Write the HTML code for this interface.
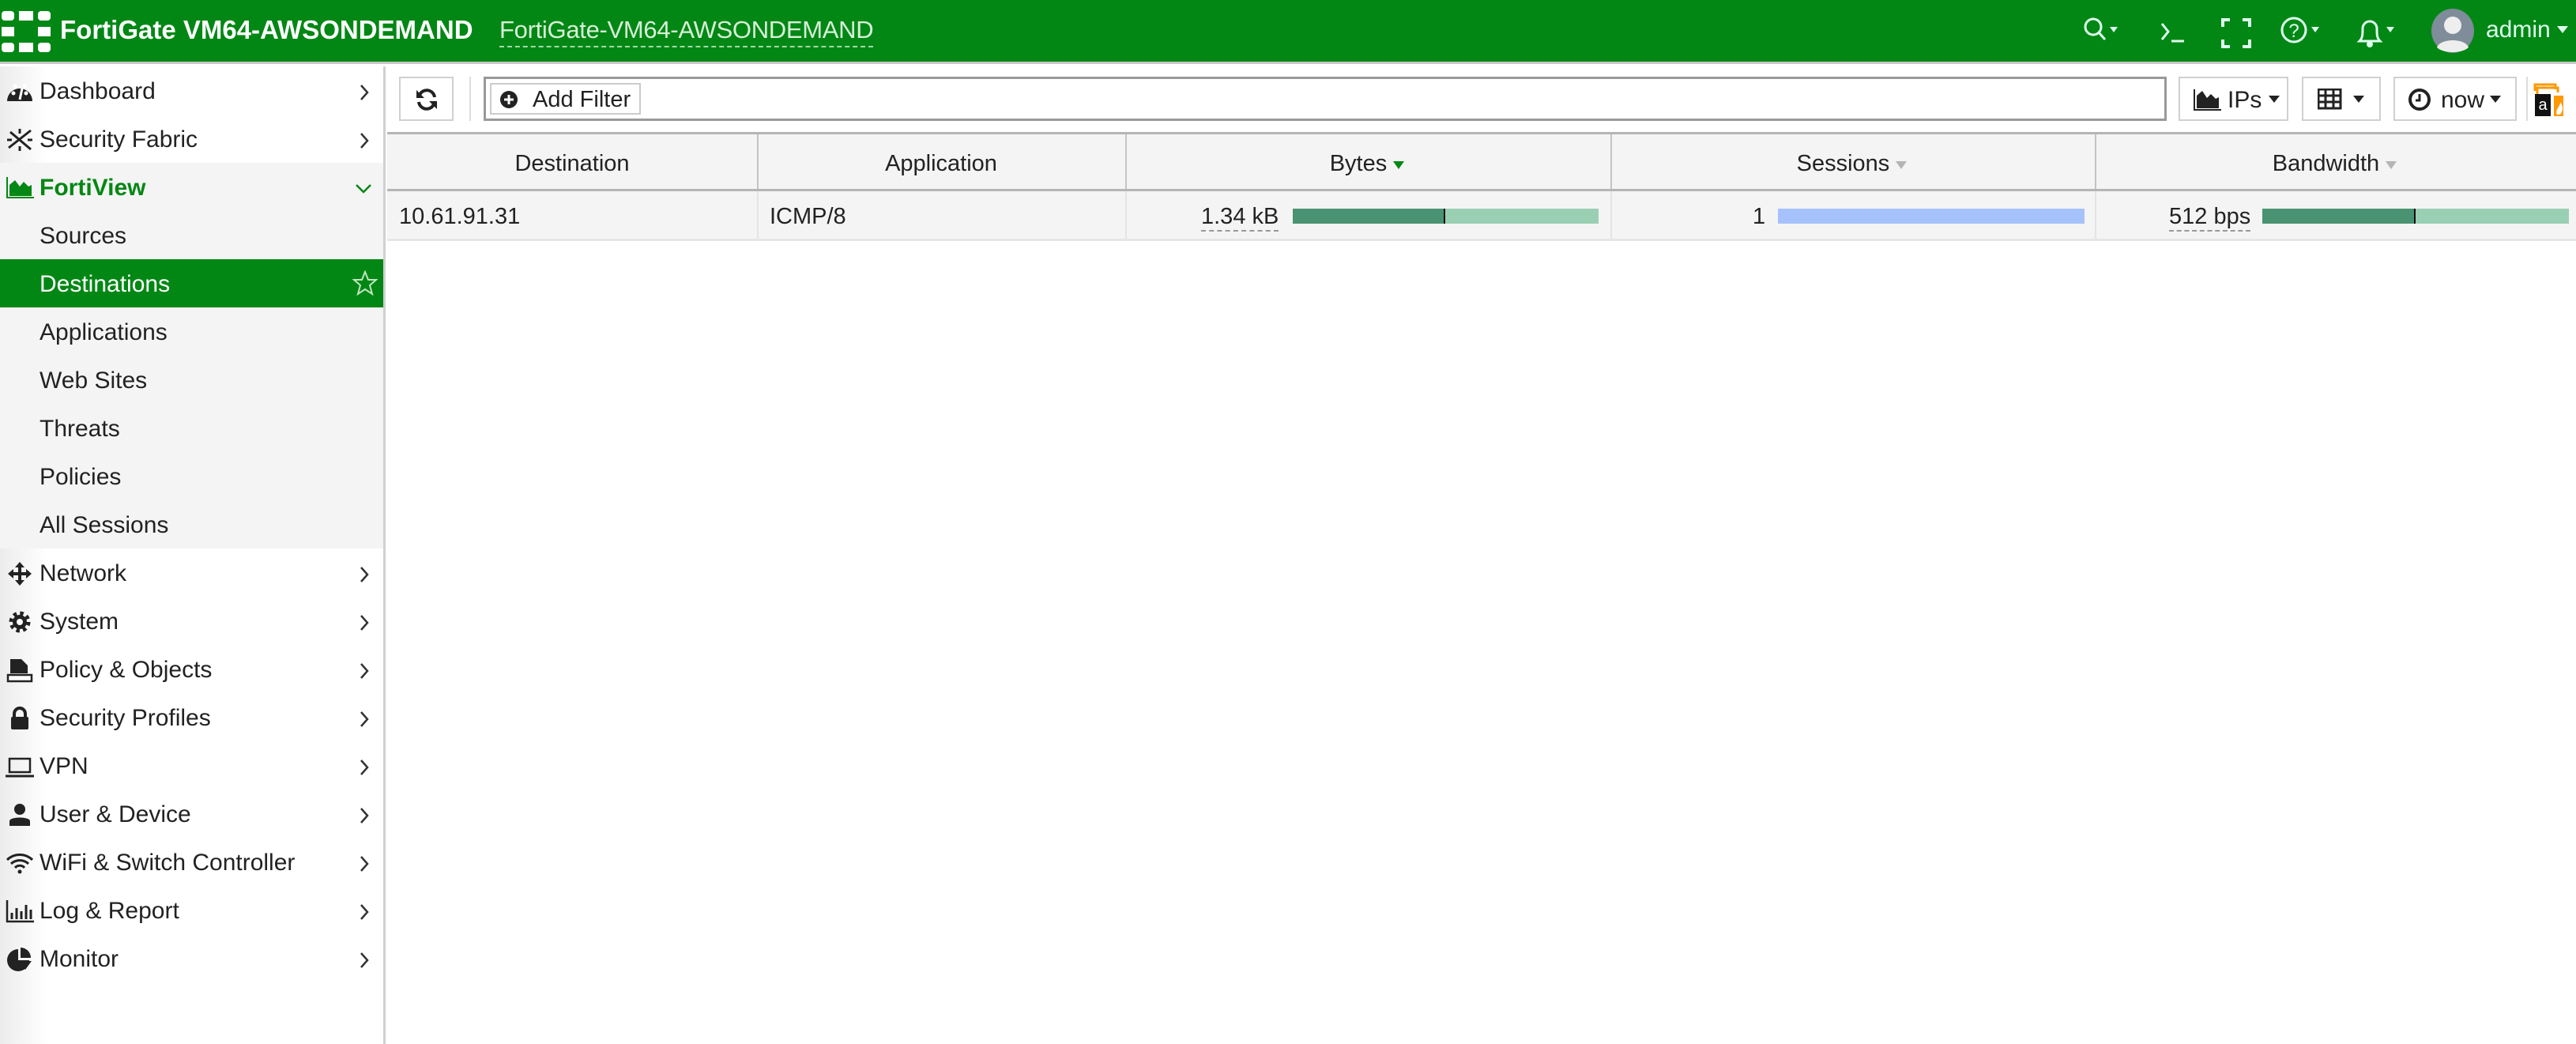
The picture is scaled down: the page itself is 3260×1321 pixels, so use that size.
<!DOCTYPE html>
<html><head><meta charset="utf-8"><style>
*{box-sizing:border-box;margin:0;padding:0}
body{width:3260px;height:1318px;overflow:hidden;background:#fff;font-family:"Liberation Sans",sans-serif;color:#222;position:relative}
.hdr{position:absolute;left:0;top:0;width:3260px;height:81px;background:#028714;border-bottom:3px solid #c8c8c8}
.a{position:absolute}
.side{position:absolute;left:0;top:81px;width:488px;height:1237px;background:linear-gradient(90deg,#ececec 0,#fff 60px);border-right:3px solid #d0d0d0}
.it{position:absolute;left:0;width:488px;height:61px;font-size:30px;line-height:63px}
.it .t{position:absolute;left:50px}
.it svg{position:absolute;left:7px;top:16px}
.it svg.c{left:454px;top:22px}
.btn{position:absolute;top:96px;height:56px;border:2px solid #d0d0d0;background:#fff}
.th{position:absolute;top:166px;height:75px;background:#f4f4f4;border-top:3px solid #b5b5b5;border-bottom:3px solid #b5b5b5;font-size:29px;text-align:center;line-height:70px}
.td{position:absolute;top:241px;height:63px;background:#f4f4f4;border-bottom:3px solid #e6e6e6;font-size:29px;line-height:60px}
.vl{position:absolute;width:2px;background:#c4c4c4}
</style></head><body>
<div class="hdr">
 <svg class="a" style="left:2px;top:14px" width="64" height="52" viewBox="0 0 64 52"><g fill="#fff"><rect x="0" y="0" width="16" height="12" rx="4"/><rect x="22" y="0" width="18" height="12"/><rect x="46" y="0" width="16" height="12" rx="4"/><rect x="0" y="20" width="16" height="12"/><rect x="46" y="20" width="16" height="12"/><rect x="0" y="40" width="16" height="12" rx="4"/><rect x="22" y="40" width="18" height="12"/><rect x="46" y="40" width="16" height="12" rx="4"/></g></svg>
 <div class="a" style="left:76px;top:19px;font-size:33px;font-weight:bold;color:#fff;letter-spacing:0px">FortiGate VM64-AWSONDEMAND</div>
 <div class="a" style="left:632px;top:20px;font-size:31px;color:#d8f0d8;border-bottom:2px dashed #a8d8a8;padding-bottom:2px;letter-spacing:-0.3px">FortiGate-VM64-AWSONDEMAND</div>
 <svg class="a" style="left:2635px;top:20px" width="60" height="40" viewBox="0 0 60 40"><circle cx="14" cy="14" r="10" fill="none" stroke="#dfe" stroke-width="3"/><path d="M21 21l8 9" stroke="#dfe" stroke-width="3"/><path d="M35 14h10l-5 7z" fill="#dfe"/></svg>
 <svg class="a" style="left:2732px;top:26px" width="50" height="34" viewBox="0 0 50 34"><path d="M4 4l8 10-8 10" fill="none" stroke="#dfe" stroke-width="3"/><path d="M16 26h16" stroke="#dfe" stroke-width="3"/></svg>
 <svg class="a" style="left:2810px;top:22px" width="40" height="40" viewBox="0 0 40 40"><path d="M3 12V3h9M28 3h9v9M37 28v9h-9M12 37H3v-9" fill="none" stroke="#dfe" stroke-width="4"/></svg>
 <svg class="a" style="left:2885px;top:20px" width="60" height="40" viewBox="0 0 60 40"><circle cx="18" cy="18" r="15" fill="none" stroke="#dfe" stroke-width="3"/><text x="18" y="27" font-size="24" text-anchor="middle" fill="#dfe" font-family="Liberation Sans">?</text><path d="M40 14h10l-5 7z" fill="#dfe"/></svg>
 <svg class="a" style="left:2980px;top:18px" width="60" height="46" viewBox="0 0 60 46"><path d="M6 34c4-4 4-8 4-16a9 9 0 0 1 18 0c0 8 0 12 4 16z" fill="none" stroke="#dfe" stroke-width="3"/><circle cx="19" cy="38" r="4" fill="#dfe"/><path d="M40 16h10l-5 7z" fill="#dfe"/></svg>
 <svg class="a" style="left:3076px;top:10px" width="56" height="58" viewBox="0 0 56 58"><ellipse cx="28" cy="29" rx="27" ry="28" fill="#7f8c99"/><circle cx="28" cy="22" r="11" fill="#eee"/><path d="M8 50c4-12 36-12 40 0c-8 8-32 8-40 0z" fill="#eee"/></svg>
 <div class="a" style="left:3146px;top:21px;font-size:30px;color:#dfe">admin</div>
 <svg class="a" style="left:3236px;top:33px" width="16" height="12"><path d="M0 0h14l-7 9z" fill="#dfe"/></svg>
</div>

<div class="side" style="top:84px">
 <div class="it" style="top:0px"><svg width="36" height="30" viewBox="0 0 36 30"><path d="M2 28A16 16 0 1 1 34 28z" fill="#222"/><circle cx="10" cy="18" r="2.5" fill="#fff"/><circle cx="12" cy="9" r="2.5" fill="#fff"/><circle cx="24" cy="9" r="2.5" fill="#fff"/><circle cx="26" cy="18" r="2.5" fill="#fff"/><path d="M18 26l3-14" stroke="#fff" stroke-width="3"/></svg><span class="t">Dashboard</span><svg class="c" width="14" height="22" viewBox="0 0 14 22"><path d="M3 2l8 9-8 9" fill="none" stroke="#333" stroke-width="2.5"/></svg></div>
 <div class="it" style="top:61px"><svg width="36" height="32" viewBox="0 0 36 32"><path d="M4 26L32 4M6 6l26 22M18 2v6M2 16h6M28 16h6M18 24v6" stroke="#222" stroke-width="3"/></svg><span class="t">Security Fabric</span><svg class="c" width="14" height="22" viewBox="0 0 14 22"><path d="M3 2l8 9-8 9" fill="none" stroke="#333" stroke-width="2.5"/></svg></div>
 <div class="it" style="top:122px;background:#f4f4f4;color:#028714;font-weight:bold;width:485px"><svg width="36" height="30" viewBox="0 0 36 30"><path d="M2 2v26h34" fill="none" stroke="#028714" stroke-width="2"/><path d="M5 26V12l7-6 6 8 5-6 6 6 4-2v14z" fill="#028714"/></svg><span class="t">FortiView</span><svg style="left:449px;top:26px" width="22" height="14" viewBox="0 0 22 14"><path d="M2 2l9 9 9-9" fill="none" stroke="#028714" stroke-width="2.5"/></svg></div>
 <div style="position:absolute;left:0;top:183px;width:485px;height:427px;background:#f4f4f4"></div>
 <div class="it" style="top:183px"><span class="t">Sources</span></div>
 <div class="it" style="top:244px;background:#028714;color:#fff;width:485px"><span class="t">Destinations</span><svg style="left:446px;top:14px" width="32" height="32" viewBox="0 0 32 32"><path d="M16 2l4 10h10l-8 7 3 11-9-6-9 6 3-11-8-7h10z" fill="none" stroke="#bfe5bf" stroke-width="2"/></svg></div>
 <div class="it" style="top:305px"><span class="t">Applications</span></div>
 <div class="it" style="top:366px"><span class="t">Web Sites</span></div>
 <div class="it" style="top:427px"><span class="t">Threats</span></div>
 <div class="it" style="top:488px"><span class="t">Policies</span></div>
 <div class="it" style="top:549px"><span class="t">All Sessions</span></div>
 <div class="it" style="top:610px"><svg width="36" height="32" viewBox="0 0 36 32"><path d="M18 1l6 7h-4v6h6v-4l7 6-7 6v-4h-6v6h4l-6 7-6-7h4v-6h-6v4l-7-6 7-6v4h6v-6h-4z" fill="#222"/></svg><span class="t">Network</span><svg class="c" width="14" height="22" viewBox="0 0 14 22"><path d="M3 2l8 9-8 9" fill="none" stroke="#333" stroke-width="2.5"/></svg></div>
 <div class="it" style="top:671px"><svg width="36" height="32" viewBox="0 0 36 32"><circle cx="18" cy="16" r="10" fill="none" stroke="#222" stroke-width="7" stroke-dasharray="4 3.85"/><circle cx="18" cy="16" r="9" fill="#222"/><circle cx="18" cy="16" r="4" fill="#fff"/></svg><span class="t">System</span><svg class="c" width="14" height="22" viewBox="0 0 14 22"><path d="M3 2l8 9-8 9" fill="none" stroke="#333" stroke-width="2.5"/></svg></div>
 <div class="it" style="top:732px"><svg width="36" height="32" viewBox="0 0 36 32"><path d="M6 2h14l8 8v10H6z" fill="#222"/><path d="M3 22h30v8H3z" fill="#fff" stroke="#222" stroke-width="2.5"/></svg><span class="t">Policy &amp; Objects</span><svg class="c" width="14" height="22" viewBox="0 0 14 22"><path d="M3 2l8 9-8 9" fill="none" stroke="#333" stroke-width="2.5"/></svg></div>
 <div class="it" style="top:793px"><svg width="36" height="32" viewBox="0 0 36 32"><path d="M11 14v-4a7 7 0 0 1 14 0v4" fill="none" stroke="#222" stroke-width="4"/><rect x="7" y="14" width="22" height="16" rx="2" fill="#222"/></svg><span class="t">Security Profiles</span><svg class="c" width="14" height="22" viewBox="0 0 14 22"><path d="M3 2l8 9-8 9" fill="none" stroke="#333" stroke-width="2.5"/></svg></div>
 <div class="it" style="top:854px"><svg width="36" height="32" viewBox="0 0 36 32"><rect x="5" y="6" width="26" height="17" fill="none" stroke="#222" stroke-width="2.5"/><path d="M0 28h36" stroke="#222" stroke-width="3"/></svg><span class="t">VPN</span><svg class="c" width="14" height="22" viewBox="0 0 14 22"><path d="M3 2l8 9-8 9" fill="none" stroke="#333" stroke-width="2.5"/></svg></div>
 <div class="it" style="top:915px"><svg width="36" height="32" viewBox="0 0 36 32"><circle cx="18" cy="9" r="7" fill="#222"/><path d="M5 30v-6c0-6 26-6 26 0v6z" fill="#222"/></svg><span class="t">User &amp; Device</span><svg class="c" width="14" height="22" viewBox="0 0 14 22"><path d="M3 2l8 9-8 9" fill="none" stroke="#333" stroke-width="2.5"/></svg></div>
 <div class="it" style="top:976px"><svg width="36" height="32" viewBox="0 0 36 32"><path d="M2 12a23 23 0 0 1 32 0M7 17a16 16 0 0 1 22 0M12 22a8 8 0 0 1 12 0" fill="none" stroke="#222" stroke-width="3"/><circle cx="18" cy="27" r="2.5" fill="#222"/></svg><span class="t">WiFi &amp; Switch Controller</span><svg class="c" width="14" height="22" viewBox="0 0 14 22"><path d="M3 2l8 9-8 9" fill="none" stroke="#333" stroke-width="2.5"/></svg></div>
 <div class="it" style="top:1037px"><svg width="36" height="32" viewBox="0 0 36 32"><path d="M2 2v27h34" fill="none" stroke="#222" stroke-width="2.5"/><path d="M8 18v8M14 12v14M20 16v10M26 8v18M32 14v12" stroke="#222" stroke-width="3"/></svg><span class="t">Log &amp; Report</span><svg class="c" width="14" height="22" viewBox="0 0 14 22"><path d="M3 2l8 9-8 9" fill="none" stroke="#333" stroke-width="2.5"/></svg></div>
 <div class="it" style="top:1098px"><svg width="36" height="32" viewBox="0 0 36 32"><path d="M16 3a14 14 0 1 0 14 14H16z" fill="#222"/><path d="M19 1a13 13 0 0 1 13 13H19z" fill="#222"/><path d="M19 18h14l-8 11z" fill="#222"/></svg><span class="t">Monitor</span><svg class="c" width="14" height="22" viewBox="0 0 14 22"><path d="M3 2l8 9-8 9" fill="none" stroke="#333" stroke-width="2.5"/></svg></div>
</div>

<!-- toolbar -->
<div class="btn" style="left:505px;width:69px;top:97px"><svg class="a" style="left:17px;top:12px" width="32" height="30" viewBox="0 0 32 30"><path d="M26 12A10 10 0 0 0 7 9M6 18a10 10 0 0 0 19 3" fill="none" stroke="#222" stroke-width="4"/><path d="M3 3v10h10zM29 27V17H19z" fill="#222"/></svg></div>
<div class="a" style="left:594px;top:97px;width:2px;height:56px;background:#ddd"></div>
<div class="btn" style="left:612px;width:2130px;top:97px;border:3px solid #999"><div class="a" style="left:5px;top:5px;height:40px;width:191px;border:2px solid #ccc;font-size:29px;line-height:38px;padding-left:52px">Add Filter<svg class="a" style="left:10px;top:7px" width="24" height="24" viewBox="0 0 24 24"><circle cx="12" cy="12" r="11" fill="#222"/><path d="M12 6v12M6 12h12" stroke="#fff" stroke-width="3"/></svg></div></div>
<div class="btn" style="left:2757px;width:139px;top:97px"><svg class="a" style="left:16px;top:12px" width="36" height="30" viewBox="0 0 36 30"><path d="M2 2v26h34" fill="none" stroke="#222" stroke-width="2"/><path d="M5 26V10l7-6 6 9 5-5 6 6 4-2v14z" fill="#222"/></svg><span class="a" style="left:60px;top:11px;font-size:30px">IPs</span><svg class="a" style="left:112px;top:22px" width="16" height="12"><path d="M0 0h14l-7 9z" fill="#222"/></svg></div>
<div class="btn" style="left:2913px;width:100px;top:97px"><svg class="a" style="left:18px;top:13px" width="32" height="28" viewBox="0 0 32 28"><rect x="1" y="1" width="28" height="24" fill="none" stroke="#222" stroke-width="3"/><path d="M1 9h28M1 17h28M10 1v24M20 1v24" stroke="#222" stroke-width="3"/></svg><svg class="a" style="left:63px;top:22px" width="16" height="12"><path d="M0 0h14l-7 9z" fill="#222"/></svg></div>
<div class="btn" style="left:3029px;width:156px;top:97px"><svg class="a" style="left:16px;top:12px" width="30" height="30" viewBox="0 0 30 30"><circle cx="15" cy="15" r="12" fill="none" stroke="#222" stroke-width="4"/><path d="M15 8v8h-5" fill="none" stroke="#222" stroke-width="3"/></svg><span class="a" style="left:58px;top:11px;font-size:30px">now</span><svg class="a" style="left:120px;top:22px" width="16" height="12"><path d="M0 0h14l-7 9z" fill="#222"/></svg></div>
<div class="a" style="left:3197px;top:97px;width:2px;height:56px;background:#ddd"></div>
<svg class="a" style="left:3206px;top:101px" width="44" height="48" viewBox="0 0 44 48"><path d="M2 14V6h26v6" fill="none" stroke="#f90" stroke-width="3"/><path d="M5 18V10h26v6" fill="none" stroke="#f90" stroke-width="3"/><rect x="2" y="18" width="20" height="28" fill="#111"/><text x="12" y="38" font-size="20" fill="#fff" text-anchor="middle" font-family="Liberation Sans">a</text><path d="M26 20h12v26H26z" fill="#f90"/><path d="M30 44c-3-6 4-10 4-16 4 6 4 10 0 16z" fill="#fff"/></svg>

<!-- table -->
<div class="th" style="left:490px;width:2770px;top:167px"></div>
<div class="a" style="left:490px;top:172px;width:468px;text-align:center;font-size:29px;line-height:70px">Destination</div>
<div class="a" style="left:958px;top:172px;width:466px;text-align:center;font-size:29px;line-height:70px">Application</div>
<div class="a" style="left:1424px;top:172px;width:614px;text-align:center;font-size:29px;line-height:70px">Bytes <svg width="16" height="12"><path d="M0 0h14l-7 10z" fill="#028714"/></svg></div>
<div class="a" style="left:2038px;top:172px;width:613px;text-align:center;font-size:29px;line-height:70px">Sessions <svg width="16" height="12"><path d="M0 0h14l-7 10z" fill="#b5b5b5"/></svg></div>
<div class="a" style="left:2651px;top:172px;width:609px;text-align:center;font-size:29px;line-height:70px">Bandwidth <svg width="16" height="12"><path d="M0 0h14l-7 10z" fill="#b5b5b5"/></svg></div>
<div class="vl" style="left:958px;top:170px;height:69px"></div>
<div class="vl" style="left:1424px;top:170px;height:69px"></div>
<div class="vl" style="left:2038px;top:170px;height:69px"></div>
<div class="vl" style="left:2651px;top:170px;height:69px"></div>

<div class="td" style="left:490px;width:2770px;top:242px"></div>
<div class="a" style="left:505px;top:244px;font-size:29px;line-height:60px">10.61.91.31</div>
<div class="a" style="left:974px;top:244px;font-size:29px;line-height:60px">ICMP/8</div>
<div class="vl" style="left:958px;top:242px;height:60px;background:#e4e4e4"></div>
<div class="vl" style="left:1424px;top:242px;height:60px;background:#e4e4e4"></div>
<div class="vl" style="left:2038px;top:242px;height:60px;background:#e4e4e4"></div>
<div class="vl" style="left:2651px;top:242px;height:60px;background:#e4e4e4"></div>
<div class="a" style="left:1520px;top:257px;font-size:29px;line-height:34px;border-bottom:2px dashed #999">1.34 kB</div>
<div class="a" style="left:1636px;top:264px;width:192px;height:19px;background:#4a9372"></div>
<div class="a" style="left:1827px;top:264px;width:2px;height:19px;background:#111"></div>
<div class="a" style="left:1829px;top:264px;width:194px;height:19px;background:#99cfb3"></div>
<div class="a" style="left:2218px;top:257px;font-size:29px;line-height:34px">1</div>
<div class="a" style="left:2250px;top:264px;width:388px;height:19px;background:#a6c2fc"></div>
<div class="a" style="left:2745px;top:257px;font-size:29px;line-height:34px;border-bottom:2px dashed #999">512 bps</div>
<div class="a" style="left:2863px;top:264px;width:193px;height:19px;background:#4a9372"></div>
<div class="a" style="left:3055px;top:264px;width:2px;height:19px;background:#111"></div>
<div class="a" style="left:3057px;top:264px;width:194px;height:19px;background:#99cfb3"></div>
</body></html>
